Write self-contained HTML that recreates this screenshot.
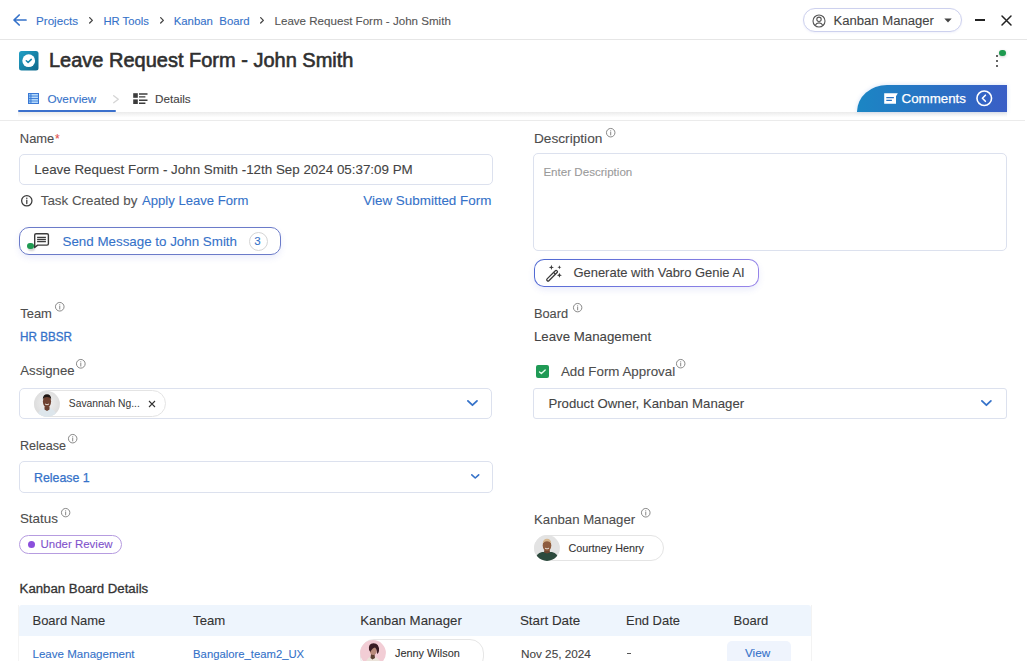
<!DOCTYPE html>
<html><head><meta charset="utf-8"><title>Leave Request Form - John Smith</title>
<style>
html,body{margin:0;padding:0;background:#fff;}
body{width:1027px;height:661px;overflow:hidden;position:relative;font-family:"Liberation Sans",sans-serif;-webkit-font-smoothing:antialiased;}

.a{position:absolute;box-sizing:content-box;}
.t{position:absolute;white-space:nowrap;line-height:1;-webkit-text-stroke:0.1px currentColor;}
.box{border:1px solid #dce1ee;border-radius:5px;background:#fff;}
svg.a{overflow:visible;}
</style></head><body>
<div class="a" style="left:0;top:39px;width:1027px;height:1px;background:#e6e6e6"></div>
<svg class="a" style="left:12px;top:13px" width="15" height="14" viewBox="0 0 15 14"><path d="M14 7H2.2M7.2 2L2 7l5.2 5" fill="none" stroke="#3572c9" stroke-width="1.7" stroke-linecap="round" stroke-linejoin="round"/></svg>
<div class="t" style="left:36.00px;top:15.00px;font-size:11.63px;color:#3572c9;">Projects</div>
<svg class="a" style="left:87.2px;top:14.8px" width="8.0" height="10.7"><polyline points="2.65,2.65 5.35,5.35 2.65,8.05" fill="none" stroke="#444" stroke-width="1.3" stroke-linecap="round" stroke-linejoin="round"/></svg>
<div class="t" style="left:103.40px;top:16.00px;font-size:11.24px;color:#3572c9;">HR Tools</div>
<svg class="a" style="left:157.5px;top:14.8px" width="8.0" height="10.7"><polyline points="2.65,2.65 5.35,5.35 2.65,8.05" fill="none" stroke="#444" stroke-width="1.3" stroke-linecap="round" stroke-linejoin="round"/></svg>
<div class="t" style="left:173.70px;top:16.00px;font-size:11.40px;color:#3572c9;">Kanban&nbsp; Board</div>
<svg class="a" style="left:258.0px;top:14.8px" width="8.0" height="10.7"><polyline points="2.65,2.65 5.35,5.35 2.65,8.05" fill="none" stroke="#444" stroke-width="1.3" stroke-linecap="round" stroke-linejoin="round"/></svg>
<div class="t" style="left:274.50px;top:16.00px;font-size:11.59px;color:#555;">Leave Request Form - John Smith</div>
<div class="a" style="left:802.5px;top:8.3px;width:157px;height:22px;border:1px solid #cdd1ee;border-radius:12px;background:#fff;box-shadow:0 1px 2px rgba(80,90,200,0.08)"></div>
<svg class="a" style="left:811.5px;top:13.6px" width="14" height="14" viewBox="0 0 14 14"><circle cx="7" cy="7" r="6" fill="none" stroke="#555" stroke-width="1.1"/><circle cx="7" cy="5.3" r="2.2" fill="none" stroke="#555" stroke-width="1.1"/><path d="M3.1 11.4c0.9-1.7 2.2-2.5 3.9-2.5s3 0.8 3.9 2.5" fill="none" stroke="#555" stroke-width="1.1"/></svg>
<div class="t" style="left:833.40px;top:14.00px;font-size:13.11px;color:#444;">Kanban Manager</div>
<svg class="a" style="left:943.5px;top:18px" width="8" height="5" viewBox="0 0 8 5"><path d="M0.3 0.5h7.4L4 4.6z" fill="#444"/></svg>
<div class="a" style="left:974.5px;top:19.2px;width:10.5px;height:1.8px;background:#222"></div>
<svg class="a" style="left:1001px;top:15px" width="11" height="11" viewBox="0 0 11 11"><path d="M1 1l9 9M10 1l-9 9" stroke="#222" stroke-width="1.5" stroke-linecap="round"/></svg>
<svg class="a" style="left:19px;top:51px" width="19.5" height="19.5" viewBox="0 0 19.5 19.5"><defs><linearGradient id="ag" x1="0" y1="0" x2="1" y2="1"><stop offset="0" stop-color="#22a0c6"/><stop offset="1" stop-color="#0f688a"/></linearGradient></defs><rect width="19.5" height="19.5" rx="2.5" fill="url(#ag)"/><circle cx="9.7" cy="9.7" r="6.4" fill="#fff"/><path d="M7.3 9.8l1.8 1.6 3.2-3" fill="none" stroke="#1a86ad" stroke-width="1.5" stroke-linecap="round" stroke-linejoin="round"/></svg>
<div class="t" style="left:48.90px;top:50.00px;font-size:20.01px;color:#2f2f2f;-webkit-text-stroke:0.6px #2f2f2f;">Leave Request Form - John Smith</div>
<div class="a" style="left:996px;top:55px;width:2.2px;height:2.2px;border-radius:1px;background:#333"></div>
<div class="a" style="left:996px;top:60px;width:2.2px;height:2.2px;border-radius:1px;background:#333"></div>
<div class="a" style="left:996px;top:65px;width:2.2px;height:2.2px;border-radius:1px;background:#333"></div>
<div class="a" style="left:999.3px;top:49.7px;width:6.6px;height:6.6px;border-radius:50%;background:#1d9a4f;box-shadow:0 1px 3px rgba(0,0,0,0.2)"></div>
<div class="a" style="left:18px;top:112px;width:989px;height:5px;background:linear-gradient(#ebebeb,#f8f8f8 70%,#fdfdfd)"></div>
<div class="a" style="left:0;top:120px;width:1025px;height:1px;background:#ebebeb"></div>
<svg class="a" style="left:28px;top:93px" width="11" height="11" viewBox="0 0 11 11"><rect x="0.5" y="0.5" width="10" height="10" fill="#8ec4f6" stroke="#3b78d4" stroke-width="1"/><path d="M0.5 3h10M0.5 5.5h10M0.5 8h10M3 0.5v10" stroke="#3b78d4" stroke-width="0.9"/><path d="M3.6 1.8h6.2M3.6 4.3h6.2M3.6 6.8h6.2M3.6 9.2h6.2" stroke="#d6ebff" stroke-width="0.8"/></svg>
<div class="t" style="left:47.40px;top:93.00px;font-size:11.73px;color:#3572c9;">Overview</div>
<div class="a" style="left:18px;top:109.8px;width:98px;height:2.6px;border-radius:1.3px;background:#3b70cc"></div>
<svg class="a" style="left:110.5px;top:92.6px" width="10.0" height="12.4"><polyline points="2.70,2.70 7.30,6.20 2.70,9.70" fill="none" stroke="#d6d6d6" stroke-width="1.4" stroke-linecap="round" stroke-linejoin="round"/></svg>
<svg class="a" style="left:132.5px;top:92.8px" width="15" height="11.5" viewBox="0 0 15 11.5"><rect x="0.2" y="0.2" width="4.6" height="4.6" fill="#3c3c3c"/><rect x="0.2" y="6.4" width="4.6" height="4.6" fill="#3c3c3c"/><path d="M6 1h8.5M6 3.9h6.4M6 7.2h8.5M6 10.2h6.4" stroke="#3c3c3c" stroke-width="1.4"/></svg>
<div class="t" style="left:155.00px;top:93.00px;font-size:11.68px;color:#444;">Details</div>
<div class="a" style="left:856.8px;top:85px;width:150px;height:26.6px;border-top-left-radius:30px 26.6px;background:linear-gradient(90deg,#1b86c4 0%,#2a70c4 55%,#3a5ec6 100%);box-shadow:0 0 4px rgba(60,120,220,0.22)"></div>
<svg class="a" style="left:883.5px;top:92.8px" width="14" height="11" viewBox="0 0 14 11"><path d="M0.2 0.2H13.8L12 3.2V10.8H0.2Z" fill="#fff"/><path d="M2.3 4.6h7.6M2.3 7.4h5.6" stroke="#2a74c4" stroke-width="1.3"/></svg>
<div class="t" style="left:901.50px;top:92.00px;font-size:13.34px;color:#fff;-webkit-text-stroke:0.25px #fff;">Comments</div>
<svg class="a" style="left:976px;top:90px" width="16.5" height="16.5" viewBox="0 0 16.5 16.5"><circle cx="8.25" cy="8.25" r="7.3" fill="none" stroke="#fff" stroke-width="1.6"/><path d="M9.4 5.2L6.4 8.25l3 3.05" fill="none" stroke="#fff" stroke-width="1.6" stroke-linecap="round" stroke-linejoin="round"/></svg>
<div class="t" style="left:19.80px;top:133.00px;font-size:12.93px;color:#4d4d4d;">Name</div>
<div class="t" style="left:55px;top:133.2px;font-size:12px;color:#e2524f">*</div>
<div class="a box" style="left:19.3px;top:153.7px;width:471.5px;height:29px"></div>
<div class="t" style="left:34.30px;top:163.00px;font-size:13.38px;color:#444;">Leave Request Form - John Smith -12th Sep 2024 05:37:09 PM</div>
<svg class="a" style="left:20.7px;top:194.7px" width="11.6" height="11.6" viewBox="0 0 11.60 11.60"><circle cx="5.80" cy="5.80" r="5.17" fill="none" stroke="#3a3a3a" stroke-width="1.25"/><line x1="5.80" y1="5.10" x2="5.80" y2="8.58" stroke="#3a3a3a" stroke-width="1.25" stroke-linecap="round"/><circle cx="5.80" cy="3.36" r="0.75" fill="#3a3a3a"/></svg>
<div class="t" style="left:40.75px;top:194.00px;font-size:13.39px;color:#555;">Task Created by</div>
<div class="t" style="left:142.00px;top:194.00px;font-size:13.11px;color:#3572c9;">Apply Leave Form</div>
<div class="t" style="left:363.30px;top:194.00px;font-size:13.43px;color:#3572c9;">View Submitted Form</div>
<div class="a" style="left:19.3px;top:227px;width:259.3px;height:25.8px;border:1px solid #6b7bc9;border-radius:10px;box-shadow:0 3px 6px rgba(90,110,220,0.12)"></div>
<svg class="a" style="left:33px;top:232px" width="17" height="16" viewBox="0 0 17 16"><path d="M1.7 13.1V3.1Q1.7 1.7 3.1 1.7H14Q15.4 1.7 15.4 3.1V11.7Q15.4 13.1 14 13.1H4.6L1.7 15.5Z" fill="#fff" stroke="#3c3c3c" stroke-width="1.4" stroke-linejoin="round"/><path d="M4.1 5.4h8.8M4.1 7.5h8.8M4.1 9.6h8.8" stroke="#3c3c3c" stroke-width="1.4"/></svg>
<div class="a" style="left:27.2px;top:242.6px;width:6.4px;height:6.4px;border-radius:50%;background:#1f9a52;box-shadow:1px 2px 2px rgba(0,0,0,0.18)"></div>
<div class="t" style="left:62.50px;top:235.00px;font-size:13.36px;color:#3572c9;">Send Message to John Smith</div>
<div class="a" style="left:249.2px;top:232.3px;width:17px;height:17px;border:1px solid #d5d5d5;border-radius:50%"></div>
<div class="t" style="left:254.30px;top:236.00px;font-size:11.50px;color:#3572c9;">3</div>
<div class="t" style="left:20.20px;top:308.00px;font-size:12.97px;color:#4d4d4d;">Team</div>
<svg class="a" style="left:55.0px;top:302.0px" width="9.5" height="9.5" viewBox="0 0 9.50 9.50"><circle cx="4.75" cy="4.75" r="4.30" fill="none" stroke="#7a7a7a" stroke-width="0.9"/><line x1="4.75" y1="4.18" x2="4.75" y2="7.03" stroke="#7a7a7a" stroke-width="0.9" stroke-linecap="round"/><circle cx="4.75" cy="2.75" r="0.54" fill="#7a7a7a"/></svg>
<div class="t" style="left:20.20px;top:331.00px;font-size:12.20px;color:#3572c9;-webkit-text-stroke:0.3px #3572c9;transform:scaleX(0.9607);transform-origin:0.00px 0;">HR BBSR</div>
<div class="t" style="left:20.30px;top:364.00px;font-size:13.20px;color:#4d4d4d;">Assignee</div>
<svg class="a" style="left:76.2px;top:358.9px" width="9.6" height="9.6" viewBox="0 0 9.60 9.60"><circle cx="4.80" cy="4.80" r="4.35" fill="none" stroke="#7a7a7a" stroke-width="0.9"/><line x1="4.80" y1="4.22" x2="4.80" y2="7.10" stroke="#7a7a7a" stroke-width="0.9" stroke-linecap="round"/><circle cx="4.80" cy="2.78" r="0.54" fill="#7a7a7a"/></svg>
<div class="a box" style="left:19.1px;top:388.3px;width:471.3px;height:29px"></div>
<div class="a" style="left:34px;top:390px;width:129.5px;height:25.3px;border:1px solid #e4e4e4;border-radius:14px;background:#fff"></div>
<svg class="a" style="left:34px;top:390.5px" width="26" height="26" viewBox="0 0 26 26"><defs><clipPath id="av1"><circle cx="13" cy="13" r="12.9"/></clipPath><radialGradient id="bg1" cx="0.5" cy="0.45" r="0.6"><stop offset="0" stop-color="#f1f1f1"/><stop offset="1" stop-color="#d9d9d9"/></radialGradient></defs><g clip-path="url(#av1)"><rect width="26" height="26" fill="url(#bg1)"/><path d="M3 26Q4 17.5 13 16.5Q22 17.5 23 26Z" fill="#dde6ec"/><path d="M10.5 15.5h5v3l-2.5 1.5-2.5-1.5z" fill="#6a4030"/><ellipse cx="13" cy="10.4" rx="4.1" ry="6" fill="#6e4130"/><path d="M8.8 8.2Q9 3.3 13 3.2Q17 3.3 17.2 8.2Q16 6 13 6Q10 6 8.8 8.2Z" fill="#1e1512"/><path d="M11 13q2 1.6 4 0" stroke="#f4efe8" stroke-width="0.9" fill="none"/></g></svg>
<div class="t" style="left:68.80px;top:399.00px;font-size:10.30px;color:#3a3a3a;-webkit-text-stroke:0.05px #3a3a3a;">Savannah Ng...</div>
<svg class="a" style="left:147.5px;top:400px" width="8" height="8" viewBox="0 0 8 8"><path d="M1 1l6 6M7 1l-6 6" stroke="#333" stroke-width="1.1"/></svg>
<svg class="a" style="left:465.3px;top:398.4px" width="14.9" height="10.1"><polyline points="2.90,2.90 7.45,7.20 12.00,2.90" fill="none" stroke="#3572c9" stroke-width="1.8" stroke-linecap="round" stroke-linejoin="round"/></svg>
<div class="t" style="left:19.90px;top:440.00px;font-size:12.59px;color:#4d4d4d;">Release</div>
<svg class="a" style="left:68.4px;top:434.1px" width="9.4" height="9.4" viewBox="0 0 9.40 9.40"><circle cx="4.70" cy="4.70" r="4.25" fill="none" stroke="#7a7a7a" stroke-width="0.9"/><line x1="4.70" y1="4.14" x2="4.70" y2="6.96" stroke="#7a7a7a" stroke-width="0.9" stroke-linecap="round"/><circle cx="4.70" cy="2.73" r="0.54" fill="#7a7a7a"/></svg>
<div class="a box" style="left:19.3px;top:461.3px;width:471.5px;height:29.3px"></div>
<div class="t" style="left:34.00px;top:472.00px;font-size:12.39px;color:#3572c9;-webkit-text-stroke:0.25px #3572c9;">Release 1</div>
<svg class="a" style="left:468.5px;top:472.4px" width="12.5" height="8.8"><polyline points="2.80,2.80 6.25,6.00 9.70,2.80" fill="none" stroke="#3572c9" stroke-width="1.6" stroke-linecap="round" stroke-linejoin="round"/></svg>
<div class="t" style="left:19.90px;top:512.00px;font-size:13.40px;color:#4d4d4d;">Status</div>
<svg class="a" style="left:61.4px;top:508.4px" width="9.3" height="9.3" viewBox="0 0 9.30 9.30"><circle cx="4.65" cy="4.65" r="4.20" fill="none" stroke="#7a7a7a" stroke-width="0.9"/><line x1="4.65" y1="4.09" x2="4.65" y2="6.88" stroke="#7a7a7a" stroke-width="0.9" stroke-linecap="round"/><circle cx="4.65" cy="2.70" r="0.54" fill="#7a7a7a"/></svg>
<div class="a" style="left:19.3px;top:534.5px;width:100.5px;height:17.6px;border:1px solid #b69ce0;border-radius:10px"></div>
<div class="a" style="left:27.6px;top:540.7px;width:7.4px;height:7.4px;border-radius:50%;background:#8b4fdc"></div>
<div class="t" style="left:40.60px;top:539.00px;font-size:11.46px;color:#7f52cc;">Under Review</div>
<div class="t" style="left:19.60px;top:582.00px;font-size:13.22px;color:#333;-webkit-text-stroke:0.3px #333;">Kanban Board Details</div>
<div class="a" style="left:18.6px;top:605.3px;width:792.6px;height:30.7px;background:#eef5fd;border-radius:3px 3px 0 0"></div>
<div class="a" style="left:18px;top:605px;width:1px;height:56px;background:#f4f4f4"></div>
<div class="a" style="left:810.6px;top:604.5px;width:1px;height:57px;background:#f3f3f3"></div>
<div class="t" style="left:32.50px;top:615.00px;font-size:12.97px;color:#333;">Board Name</div>
<div class="t" style="left:193.10px;top:614.00px;font-size:13.17px;color:#333;">Team</div>
<div class="t" style="left:360.30px;top:614.00px;font-size:13.24px;color:#333;">Kanban Manager</div>
<div class="t" style="left:519.90px;top:614.00px;font-size:13.42px;color:#333;">Start Date</div>
<div class="t" style="left:626.00px;top:615.00px;font-size:12.95px;color:#333;">End Date</div>
<div class="t" style="left:733.60px;top:614.00px;font-size:13.01px;color:#333;">Board</div>
<div class="t" style="left:32.50px;top:649.00px;font-size:11.56px;color:#3572c9;">Leave Management</div>
<div class="t" style="left:193.10px;top:649.00px;font-size:11.29px;color:#3572c9;">Bangalore_team2_UX</div>
<div class="a" style="left:360.2px;top:639px;width:121.7px;height:30px;border:1px solid #e6e6e6;border-radius:14px;background:#fff"></div>
<svg class="a" style="left:360.2px;top:639.7px" width="26" height="26" viewBox="0 0 26 26"><defs><clipPath id="av3"><circle cx="13" cy="13" r="12.9"/></clipPath></defs><g clip-path="url(#av3)"><rect width="26" height="26" fill="#f2cdd5"/><path d="M5 26Q6 17 12 16.5Q20 17 22 26Z" fill="#ebe3da"/><path d="M11 14h3.5l0.5 4-2.5 1.5-2-1.5z" fill="#5a4032"/><ellipse cx="13.2" cy="10.6" rx="3.4" ry="4.4" fill="#b88a7a"/><path d="M9 10Q8 3.5 13.5 3.3Q19.5 3.5 19 11Q18.5 13.5 17 14Q17 9 15 7.5Q12 8 10.5 12Z" fill="#3a1c24"/></g></svg>
<div class="t" style="left:395.00px;top:648.00px;font-size:10.90px;color:#333;">Jenny Wilson</div>
<div class="t" style="left:520.90px;top:648.00px;font-size:11.78px;color:#444;">Nov 25, 2024</div>
<div class="a" style="left:627px;top:652.5px;width:4px;height:1.2px;background:#555"></div>
<div class="a" style="left:726.6px;top:640.8px;width:64px;height:30px;border-radius:5px;background:#eff4fd"></div>
<div class="t" style="left:745.00px;top:647.00px;font-size:11.76px;color:#3572c9;">View</div>
<div class="t" style="left:533.90px;top:132.00px;font-size:13.69px;color:#4d4d4d;">Description</div>
<svg class="a" style="left:606.4px;top:128.2px" width="9.4" height="9.4" viewBox="0 0 9.40 9.40"><circle cx="4.70" cy="4.70" r="4.25" fill="none" stroke="#7a7a7a" stroke-width="0.9"/><line x1="4.70" y1="4.14" x2="4.70" y2="6.96" stroke="#7a7a7a" stroke-width="0.9" stroke-linecap="round"/><circle cx="4.70" cy="2.73" r="0.54" fill="#7a7a7a"/></svg>
<div class="a box" style="left:533.2px;top:153.4px;width:472.3px;height:95.6px"></div>
<div class="t" style="left:543.40px;top:166.00px;font-size:11.60px;color:#9a9a9a;">Enter Description</div>
<div class="a" style="left:533.5px;top:258.5px;width:225px;height:28px;border-radius:10px;background:linear-gradient(135deg,#4d68d2,#9a86ea);box-shadow:0 3px 6px rgba(90,110,220,0.12)"></div>
<div class="a" style="left:534.5px;top:259.5px;width:223px;height:26px;border-radius:9px;background:#fff"></div>
<svg class="a" style="left:544px;top:263px" width="20" height="19" viewBox="0 0 20 19"><path d="M3.1 15.9l8.2-8.2a1.1 1.1 0 0 1 1.6 0l0.2 0.2a1.1 1.1 0 0 1 0 1.6l-8.2 8.2a1.1 1.1 0 0 1-1.6 0l-0.2-0.2a1.1 1.1 0 0 1 0-1.6z" fill="none" stroke="#3a3a3a" stroke-width="1.3"/><path d="M9.6 9.4l1.9 1.9" stroke="#3a3a3a" stroke-width="1.3"/><path d="M7.4 1.8l0.7 1.9 1.9 0.7-1.9 0.7-0.7 1.9-0.7-1.9-1.9-0.7 1.9-0.7z" fill="#3a3a3a"/><path d="M15.4 2.3l0.55 1.45 1.45 0.55-1.45 0.55-0.55 1.45-0.55-1.45-1.45-0.55 1.45-0.55z" fill="#3a3a3a"/><path d="M15.4 9.8l0.7 1.8 1.8 0.7-1.8 0.7-0.7 1.8-0.7-1.8-1.8-0.7 1.8-0.7z" fill="#3a3a3a"/></svg>
<div class="t" style="left:573.40px;top:267.00px;font-size:12.97px;color:#444;">Generate with Vabro Genie AI</div>
<div class="t" style="left:533.90px;top:308.00px;font-size:12.82px;color:#4d4d4d;">Board</div>
<svg class="a" style="left:573.2px;top:302.9px" width="9.3" height="9.3" viewBox="0 0 9.30 9.30"><circle cx="4.65" cy="4.65" r="4.20" fill="none" stroke="#7a7a7a" stroke-width="0.9"/><line x1="4.65" y1="4.09" x2="4.65" y2="6.88" stroke="#7a7a7a" stroke-width="0.9" stroke-linecap="round"/><circle cx="4.65" cy="2.70" r="0.54" fill="#7a7a7a"/></svg>
<div class="t" style="left:533.90px;top:330.00px;font-size:13.27px;color:#444;">Leave Management</div>
<svg class="a" style="left:535.8px;top:365px" width="13" height="13" viewBox="0 0 13 13"><rect width="13" height="13" rx="2" fill="#1f9a55"/><path d="M3.5 6.9l1.9 1.7 3.8-3.7" fill="none" stroke="#e6ffec" stroke-width="1.35" stroke-linecap="round" stroke-linejoin="round"/></svg>
<div class="t" style="left:560.90px;top:365.00px;font-size:13.35px;color:#4d4d4d;">Add Form Approval</div>
<svg class="a" style="left:675.5px;top:358.9px" width="9.4" height="9.4" viewBox="0 0 9.40 9.40"><circle cx="4.70" cy="4.70" r="4.25" fill="none" stroke="#7a7a7a" stroke-width="0.9"/><line x1="4.70" y1="4.14" x2="4.70" y2="6.96" stroke="#7a7a7a" stroke-width="0.9" stroke-linecap="round"/><circle cx="4.70" cy="2.73" r="0.54" fill="#7a7a7a"/></svg>
<div class="a box" style="left:533.4px;top:388.2px;width:471.4px;height:28.8px;border-radius:3px"></div>
<div class="t" style="left:548.40px;top:397.00px;font-size:13.19px;color:#444;">Product Owner, Kanban Manager</div>
<svg class="a" style="left:979.4px;top:398.4px" width="14.8" height="10.1"><polyline points="2.90,2.90 7.40,7.20 11.90,2.90" fill="none" stroke="#3572c9" stroke-width="1.8" stroke-linecap="round" stroke-linejoin="round"/></svg>
<div class="t" style="left:534.00px;top:513.00px;font-size:13.20px;color:#4d4d4d;">Kanban Manager</div>
<svg class="a" style="left:640.8px;top:508.3px" width="9.5" height="9.5" viewBox="0 0 9.50 9.50"><circle cx="4.75" cy="4.75" r="4.30" fill="none" stroke="#7a7a7a" stroke-width="0.9"/><line x1="4.75" y1="4.18" x2="4.75" y2="7.03" stroke="#7a7a7a" stroke-width="0.9" stroke-linecap="round"/><circle cx="4.75" cy="2.75" r="0.54" fill="#7a7a7a"/></svg>
<div class="a" style="left:534px;top:534.8px;width:127.5px;height:24.4px;border:1px solid #e4e4e4;border-radius:14px;background:#fff"></div>
<svg class="a" style="left:534px;top:535px" width="26" height="26" viewBox="0 0 26 26"><defs><clipPath id="av2"><circle cx="13" cy="13" r="12.9"/></clipPath></defs><g clip-path="url(#av2)"><rect width="26" height="26" fill="#e3e3e3"/><path d="M1 26Q2 18 8 17H18Q24 18 25 26Z" fill="#2c4a3d"/><path d="M10.5 14h5l0.5 3.5-3 1-3-1z" fill="#6e4630"/><ellipse cx="13" cy="10.5" rx="4.3" ry="5.6" fill="#8e5c3e"/><path d="M8.7 8.5Q9 3.8 13 3.8Q17 3.8 17.3 8.5Q15.5 6.3 13 6.3Q10.5 6.3 8.7 8.5Z" fill="#d6b58c"/><path d="M11 13.2q2 1.4 4 0" stroke="#f2eadf" stroke-width="0.9" fill="none"/></g></svg>
<div class="t" style="left:568.50px;top:543.00px;font-size:10.78px;color:#333;">Courtney Henry</div>
</body></html>
